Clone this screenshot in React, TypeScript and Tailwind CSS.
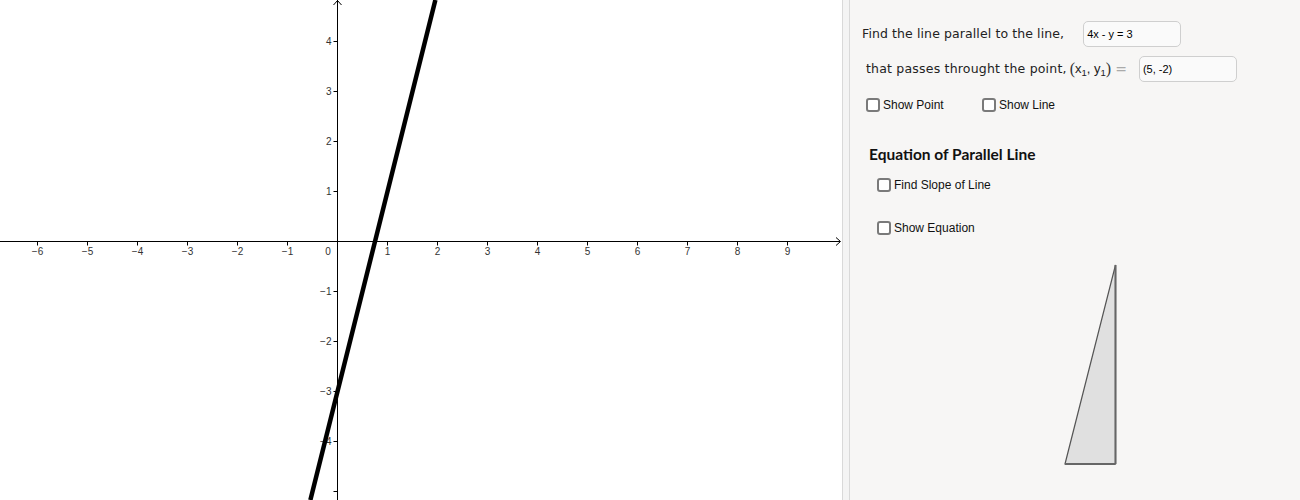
import React from "react";

const OX = 337.5;
const OY = 241.5;
const U = 50;

function Graph() {
  const xs = [-6, -5, -4, -3, -2, -1, 1, 2, 3, 4, 5, 6, 7, 8, 9];
  const ys = [4, 3, 2, 1, -1, -2, -3, -4, -5];
  const lab = (n: number) => (n < 0 ? "\u2212" + Math.abs(n) : String(n));
  const x1 = OX + U * ((OY / U + 3) / 4);
  const x2 = OX + U * ((((OY - 500) / U) + 3) / 4);
  return (
    <svg width={842} height={500} className="block" style={{ fontFamily: '"Liberation Sans", Arial, sans-serif' }}>
      <line x1={0} y1={OY} x2={840} y2={OY} stroke="#000" strokeWidth={1} />
      <polyline points={`836,${OY - 4} 840.5,${OY} 836,${OY + 4}`} fill="none" stroke="#000" strokeWidth={1} />
      <line x1={OX} y1={0} x2={OX} y2={500} stroke="#000" strokeWidth={1} />
      <polyline points={`${OX - 4},5 ${OX},0.5 ${OX + 4},5`} fill="none" stroke="#000" strokeWidth={1} />
      {xs.map((n) => (
        <g key={"x" + n}>
          <line x1={OX + n * U} y1={OY} x2={OX + n * U} y2={OY + 4} stroke="#000" strokeWidth={1} />
          <text x={OX + n * U} y={OY + 13.5} fontSize={10} fill="#333" textAnchor="middle">
            {lab(n)}
          </text>
        </g>
      ))}
      <text x={328} y={OY + 13.5} fontSize={10} fill="#333" textAnchor="middle">
        0
      </text>
      {ys.map((n) => (
        <g key={"y" + n}>
          <line x1={OX - 4} y1={OY - n * U} x2={OX} y2={OY - n * U} stroke="#000" strokeWidth={1} />
          {n !== -5 && (
            <text x={331.5} y={OY - n * U + 3.5} fontSize={10} fill="#333" textAnchor="end">
              {lab(n)}
            </text>
          )}
        </g>
      ))}
      <line x1={x1} y1={0} x2={x2} y2={500} stroke="#000" strokeWidth={4.5} />
    </svg>
  );
}

function Check({ label }: { label: string }) {
  return (
    <div className="flex items-center gap-[3px]">
      <div className="w-[14px] h-[14px] rounded-[3px] border-2 border-[#7a7a7a] bg-white box-border" />
      <span className="text-[12px] text-[#111] leading-none" style={{ fontFamily: '"Liberation Sans", Arial, sans-serif' }}>
        {label}
      </span>
    </div>
  );
}

const textFont = { fontFamily: '"DejaVu Sans", sans-serif' };

export default function App() {
  return (
    <div className="w-[1300px] h-[500px] flex bg-white overflow-hidden">
      <div className="w-[842px] h-[500px] shrink-0 bg-white">
        <Graph />
      </div>
      <div className="w-[8px] h-[500px] shrink-0 border-l border-r border-[#d9d9d9] bg-[#f4f4f4]" />
      <div className="flex-1 h-[500px] bg-[#f7f6f5] relative">
        <div className="flex flex-col pl-[12px] pt-[21px]">
          <div className="flex items-center h-[26px]">
            <span className="text-[12.5px] text-[#222] tracking-[0.1px]" style={textFont}>
              Find the line parallel to the line,
            </span>
            <div className="ml-[19px] w-[98px] h-[26px] rounded-[5px] border border-[#cfcfcf] bg-[#fafafa] flex items-center pl-[3px] text-[11px] text-black" style={{ fontFamily: '"Liberation Sans", Arial, sans-serif' }}>
              4x - y = 3
            </div>
          </div>
          <div className="flex items-center h-[26px] mt-[9px] pl-[4px]">
            <span className="text-[12.5px] text-[#222] tracking-[0.2px] whitespace-nowrap" style={textFont}>
              that passes throught the point,
            </span>
            <span className="ml-[3px] flex items-center text-[#222] whitespace-nowrap">
              <span className="text-[16px] text-[#333] leading-none" style={{ fontFamily: '"Liberation Serif", serif' }}>(</span>
              <span style={{ fontFamily: '"Liberation Sans", sans-serif' }} className="text-[13px]">
                x<sub className="text-[9.5px]">1</sub>, y<sub className="text-[9.5px]">1</sub>
              </span>
              <span className="text-[16px] text-[#333] leading-none" style={{ fontFamily: '"Liberation Serif", serif' }}>)</span>
              <span className="text-[#aaa] ml-[4px] text-[14px]" style={textFont}>=</span>
            </span>
            <div className="ml-[12px] w-[98px] h-[26px] rounded-[5px] border border-[#cfcfcf] bg-[#fafafa] flex items-center pl-[3px] text-[11px] text-black" style={{ fontFamily: '"Liberation Sans", Arial, sans-serif' }}>
              (5, -2)
            </div>
          </div>
          <div className="flex items-center mt-[16px] pl-[4px]">
            <div className="w-[116px]">
              <Check label="Show Point" />
            </div>
            <Check label="Show Line" />
          </div>
          <div className="mt-[35px] pl-[7px] text-[15.5px] font-bold text-[#111] leading-none" style={{ fontFamily: 'Lato, sans-serif' }}>
            Equation of Parallel Line
          </div>
          <div className="mt-[15px] pl-[15px]">
            <Check label="Find Slope of Line" />
          </div>
          <div className="mt-[29px] pl-[15px]">
            <Check label="Show Equation" />
          </div>
          <div className="mt-[28px] pl-[201px]">
            <svg width={62} height={205} className="block">
              <polygon points="52.5,2 52.5,201 2,201" fill="#e0e0e0" stroke="#555" strokeWidth={1.2} />
              <line x1={52.5} y1={2} x2={52.5} y2={201} stroke="#666" strokeWidth={2} />
              <line x1={2} y1={201} x2={52.5} y2={201} stroke="#666" strokeWidth={2} />
            </svg>
          </div>
        </div>
      </div>
    </div>
  );
}
